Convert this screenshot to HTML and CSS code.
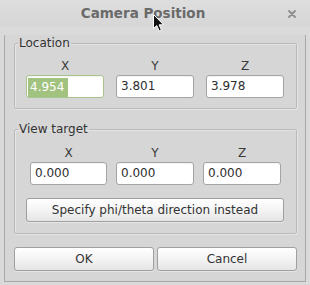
FILE: index.html
```html
<!DOCTYPE html>
<html lang="en">
<head>
  <meta charset="UTF-8">
  <title>Camera Position</title>
  <link rel="stylesheet" href="styles.css">
</head>
<body>
  <div class="window">
    <div class="titlebar">
      <div class="title">Camera Position</div>
      <div class="close">
        <svg width="8" height="8" viewBox="0 0 8 8"><path d="M1 1 L7 7 M7 1 L1 7" stroke="#8c8c8c" stroke-width="1.8" stroke-linecap="round"/></svg>
      </div>
      <svg class="cursor" width="13" height="19" viewBox="0 0 13 19"><path d="M1.5 1.5 L1.5 15.5 L4.8 12.6 L7.2 18 L9.4 17 L7.1 11.8 L11.6 11.8 Z" fill="#111" stroke="#fff" stroke-width="1" stroke-linejoin="round"/></svg>
    </div>

    <div class="content">
      <fieldset class="group location">
        <legend>Location</legend>
        <div class="coords">
          <div class="coord"><span class="axis">X</span><span class="entry focus"><span class="sel">4.954</span></span></div>
          <div class="coord"><span class="axis">Y</span><span class="entry">3.801</span></div>
          <div class="coord"><span class="axis">Z</span><span class="entry">3.978</span></div>
        </div>
      </fieldset>

      <fieldset class="group target">
        <legend>View target</legend>
        <div class="coords">
          <div class="coord"><span class="axis">X</span><span class="entry">0.000</span></div>
          <div class="coord"><span class="axis">Y</span><span class="entry">0.000</span></div>
          <div class="coord"><span class="axis">Z</span><span class="entry">0.000</span></div>
        </div>
        <button class="btn wide">Specify phi/theta direction instead</button>
      </fieldset>

      <div class="actions">
        <button class="btn">OK</button>
        <button class="btn">Cancel</button>
      </div>
    </div>
  </div>
</body>
</html>
```

FILE: styles.css
```css
* {
  box-sizing: border-box;
}

body {
  margin: 0;
  background: #dadada;
  font-family: 'DejaVu Sans', sans-serif;
  font-size: 12px;
  color: #333;
}

.window {
  width: 310px;
  height: 285px;
}

.titlebar {
  position: relative;
  display: flex;
  height: 27px;
  background: linear-gradient(#dedede, #d6d6d6);
}

.title {
  flex: 1;
  text-align: center;
  line-height: 27px;
  font-size: 13.5px;
  font-weight: bold;
  color: #6a6a6a;
}

.close {
  width: 24px;
  display: flex;
  align-items: center;
  padding-left: 2px;
  padding-top: 1px;
}

.cursor {
  position: absolute;
  left: 152px;
  top: 13px;
}

.content {
  margin: 0 4px;
  border: 1px solid #a9a9a9;
  border-top: none;
  background: #d6d6d6;
  padding: 0 8px 10px 9px;
}

.group {
  margin: 0;
  padding: 0;
  border: 1px solid #bababa;
  border-radius: 2px;
  box-shadow: inset 1px 1px 0 #e4e4e4, 1px 1px 0 #e4e4e4;
  min-width: 0;
}

.group legend {
  padding: 0 1px;
  margin-left: 3px;
  line-height: 16px;
  color: #333;
}

.location {
  margin-top: 8px;
  padding-bottom: 10px;
}

.target {
  margin-top: 12px;
  padding-bottom: 11px;
}

.coords {
  display: grid;
}

.location .coords {
  grid-template-columns: 78px 78px 78px;
  column-gap: 12px;
  padding: 0 12px 0 11px;
  margin-top: 8px;
}

.target .coords {
  grid-template-columns: 77px 78px 78px;
  column-gap: 9px;
  padding: 0 15px;
  margin-top: 9px;
}

.coord {
  display: flex;
  flex-direction: column;
}

.axis {
  text-align: center;
  line-height: 15px;
  margin-bottom: 1px;
  color: #3a3a3a;
}

.entry {
  display: block;
  height: 23px;
  border: 1px solid #a4a4a4;
  border-radius: 3px;
  background: #fff;
  padding: 0 4px;
  line-height: 21px;
  color: #2e2e2e;
  box-shadow: inset 0 1px 1px rgba(0, 0, 0, 0.05);
}

.entry.focus {
  border-color: #a9c48c;
  padding: 1px 1px;
}

.sel {
  display: inline-block;
  line-height: 19px;
  padding: 0 4px 0 2px;
  background: #a2c27f;
  color: #fff;
}

.btn {
  display: block;
  height: 24px;
  padding: 0;
  font-family: inherit;
  font-size: 12px;
  color: #333;
  border: 1px solid #9f9f9f;
  border-radius: 3px;
  background: linear-gradient(#ffffff, #f4f4f4 50%, #e5e5e5);
  box-shadow: 0 1px 0 rgba(255, 255, 255, 0.4);
}

.btn.wide {
  width: auto;
  margin: 13px 12px 0 11px;
  width: calc(100% - 23px);
}

.actions {
  display: grid;
  grid-template-columns: 1fr 1fr;
  column-gap: 3px;
  margin-top: 13px;
}
```
